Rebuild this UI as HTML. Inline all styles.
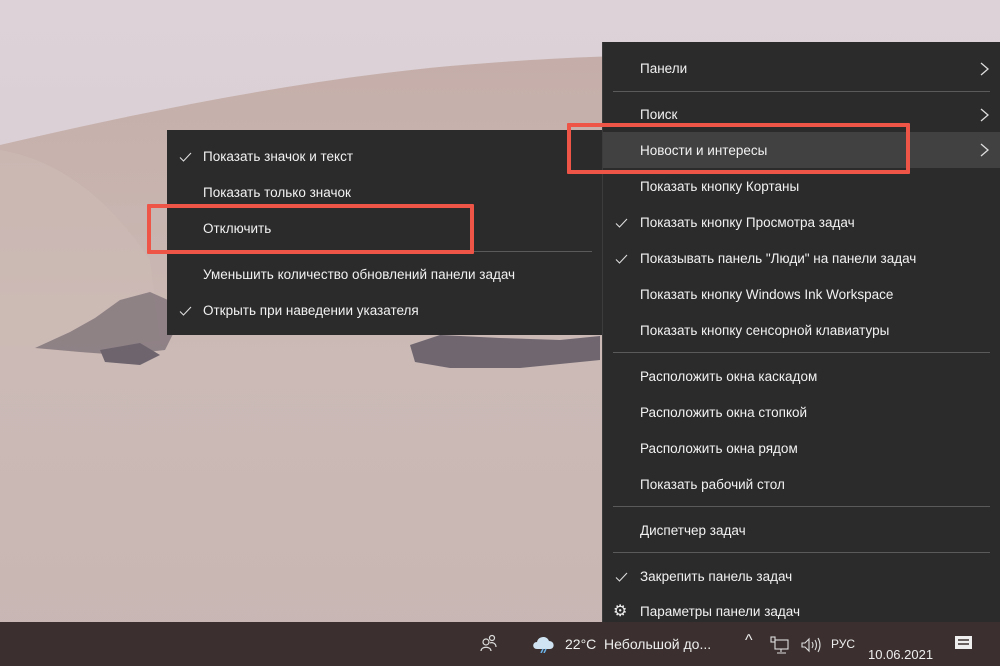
<!DOCTYPE html>
<html><head><meta charset="utf-8"><style>
*{margin:0;padding:0;box-sizing:border-box}
body{width:1000px;height:666px;overflow:hidden;position:relative;font-family:"Liberation Sans",sans-serif;background:#d8ccd2}
.menu{position:absolute;background:#2b2b2b;color:#f2f2f2;font-size:13.5px}
.it{position:absolute;left:0;right:0;height:36px;line-height:36px}
.it span.t{position:absolute}
.ck{position:absolute;top:13px;width:13px;height:10px}
.sep{position:absolute;height:1px;background:#5a5a5a}
.chev{position:absolute;right:10px;top:11px;width:10px;height:14px}
.red{position:absolute;border:4px solid #ee5547;border-radius:1px}
.tb{position:absolute;left:0;top:622px;width:1000px;height:44px;background:#3b302f;color:#eee;font-size:14px}
</style></head><body>
<svg width="0" height="0" style="position:absolute"><defs><symbol id="chk" viewBox="0 0 13 10"><path d="M1 5.5 L4.5 9 L12 1" stroke="#ddd" stroke-width="1.1" fill="none"/></symbol></defs></svg>
<svg width="1000" height="666" style="position:absolute;left:0;top:0">
<defs>
<linearGradient id="sky" x1="0" y1="0" x2="0" y2="1"><stop offset="0" stop-color="#dcd2d8"/><stop offset="1" stop-color="#d6c7cb"/></linearGradient>
<linearGradient id="dune" x1="0" y1="0" x2="0" y2="1"><stop offset="0" stop-color="#c5aea9"/><stop offset="0.5" stop-color="#cbbab6"/><stop offset="1" stop-color="#c8b6b3"/></linearGradient>
</defs>
<rect width="1000" height="666" fill="url(#sky)"/>
<path d="M0 145 C150 110 300 80 450 66 C520 60 580 57 620 56 L620 666 L0 666Z" fill="url(#dune)"/>
<path d="M0 150 C60 160 110 200 150 260 L160 340 L0 360Z" fill="#cdbbb6" opacity="0.6"/>
<path d="M35 348 L70 332 L95 318 L120 300 L150 292 L168 300 L175 330 L165 350 L120 355 L80 352Z" fill="#7b6f76" opacity="0.75"/>
<path d="M100 350 L140 343 L160 355 L140 365 L105 362Z" fill="#6d646d"/>
<path d="M410 345 L440 335 L500 338 L560 340 L600 336 L600 360 L520 368 L450 368 L415 362Z" fill="#6f6670"/>
</svg>

<div class="menu" style="left:167px;top:130px;width:435px;height:205px">
  <div class="it" style="top:9px"><svg class="ck" style="left:12px"><use href="#chk"/></svg><span class="t" style="left:36px">Показать значок и текст</span></div>
  <div class="it" style="top:45px"><span class="t" style="left:36px">Показать только значок</span></div>
  <div class="it" style="top:81px"><span class="t" style="left:36px">Отключить</span></div>
  <div class="sep" style="left:12px;right:10px;top:121px"></div>
  <div class="it" style="top:127px"><span class="t" style="left:36px">Уменьшить количество обновлений панели задач</span></div>
  <div class="it" style="top:163px"><svg class="ck" style="left:12px"><use href="#chk"/></svg><span class="t" style="left:36px">Открыть при наведении указателя</span></div>
</div>

<div class="menu" style="left:602px;top:42px;width:398px;height:580px;border-left:1px solid #3c3c3c">
  <div class="it" style="top:9px"><span class="t" style="left:37px">Панели</span><svg class="chev" viewBox="0 0 10 14"><path d="M1 1 L8 7 L1 13" stroke="#ddd" stroke-width="1.3" fill="none"/></svg></div>
  <div class="sep" style="left:10px;right:10px;top:49px"></div>
  <div class="it" style="top:55px"><span class="t" style="left:37px">Поиск</span><svg class="chev" viewBox="0 0 10 14"><path d="M1 1 L8 7 L1 13" stroke="#ddd" stroke-width="1.3" fill="none"/></svg></div>
  <div class="it" style="top:90px;background:#414141"><span class="t" style="left:37px;top:1px">Новости и интересы</span><svg class="chev" viewBox="0 0 10 14"><path d="M1 1 L8 7 L1 13" stroke="#ddd" stroke-width="1.3" fill="none"/></svg></div>
  <div class="it" style="top:127px"><span class="t" style="left:37px">Показать кнопку Кортаны</span></div>
  <div class="it" style="top:163px"><svg class="ck" style="left:12px"><use href="#chk"/></svg><span class="t" style="left:37px">Показать кнопку Просмотра задач</span></div>
  <div class="it" style="top:199px"><svg class="ck" style="left:12px"><use href="#chk"/></svg><span class="t" style="left:37px">Показывать панель "Люди" на панели задач</span></div>
  <div class="it" style="top:235px"><span class="t" style="left:37px">Показать кнопку Windows Ink Workspace</span></div>
  <div class="it" style="top:271px"><span class="t" style="left:37px">Показать кнопку сенсорной клавиатуры</span></div>
  <div class="sep" style="left:10px;right:10px;top:310px"></div>
  <div class="it" style="top:317px"><span class="t" style="left:37px">Расположить окна каскадом</span></div>
  <div class="it" style="top:353px"><span class="t" style="left:37px">Расположить окна стопкой</span></div>
  <div class="it" style="top:389px"><span class="t" style="left:37px">Расположить окна рядом</span></div>
  <div class="it" style="top:425px"><span class="t" style="left:37px">Показать рабочий стол</span></div>
  <div class="sep" style="left:10px;right:10px;top:464px"></div>
  <div class="it" style="top:471px"><span class="t" style="left:37px">Диспетчер задач</span></div>
  <div class="sep" style="left:10px;right:10px;top:510px"></div>
  <div class="it" style="top:517px"><svg class="ck" style="left:12px"><use href="#chk"/></svg><span class="t" style="left:37px">Закрепить панель задач</span></div>
  <div class="it" style="top:552px"><span style="position:absolute;left:10px;font-size:16px;color:#eee">⚙</span><span class="t" style="left:37px">Параметры панели задач</span></div>
</div>

<div class="red" style="left:147px;top:204px;width:327px;height:50px"></div>
<div class="red" style="left:567px;top:123px;width:343px;height:51px"></div>

<div class="tb">
  <svg style="position:absolute;left:480px;top:12px" width="18" height="18" viewBox="0 0 18 18" fill="none" stroke="#ddd" stroke-width="1.2"><circle cx="6" cy="8" r="3"/><path d="M1 17 C1 12 11 12 11 17"/><circle cx="12" cy="4" r="2.5"/><path d="M10 9 C12 8 16 9 16 13"/></svg>
  <svg style="position:absolute;left:531px;top:11px" width="26" height="20" viewBox="0 0 26 20"><path d="M6 16 C1 16 1 9 6 9 C7 3 16 2 18 8 C24 8 24 16 19 16Z" fill="#cfe3f2"/><path d="M12 16 l-2 4 M15 16 l-2 4" stroke="#6bb3e8" stroke-width="1.5"/></svg>
  <span style="position:absolute;left:565px;top:14px">22°C&nbsp; Небольшой до...</span>
  <span style="position:absolute;left:745px;top:10px;font-size:16px">^</span>
  <svg style="position:absolute;left:770px;top:14px" width="20" height="18" viewBox="0 0 20 18" fill="none" stroke="#ddd" stroke-width="1.1"><rect x="1" y="1" width="4" height="5"/><rect x="5" y="4" width="13" height="9"/><path d="M11 13 v3 M7 17 h9"/></svg>
  <svg style="position:absolute;left:800px;top:15px" width="24" height="16" viewBox="0 0 24 16" fill="none" stroke="#ddd" stroke-width="1.1"><path d="M2 6 h3 l4 -4 v12 l-4 -4 h-3Z"/><path d="M12 5 q2 3 0 6 M15 3 q3 5 0 10 M18 1 q4 7 0 14"/></svg>
  <span style="position:absolute;left:831px;top:15px;font-size:12px">РУС</span>
  <span style="position:absolute;left:868px;top:25px;font-size:13px">10.06.2021</span>
  <svg style="position:absolute;left:954px;top:13px" width="20" height="18" viewBox="0 0 20 18"><rect x="1" y="1" width="17" height="13" fill="#eee"/><path d="M4 5h11M4 9h11" stroke="#3b302f" stroke-width="1.5"/></svg>
</div>
</body></html>
